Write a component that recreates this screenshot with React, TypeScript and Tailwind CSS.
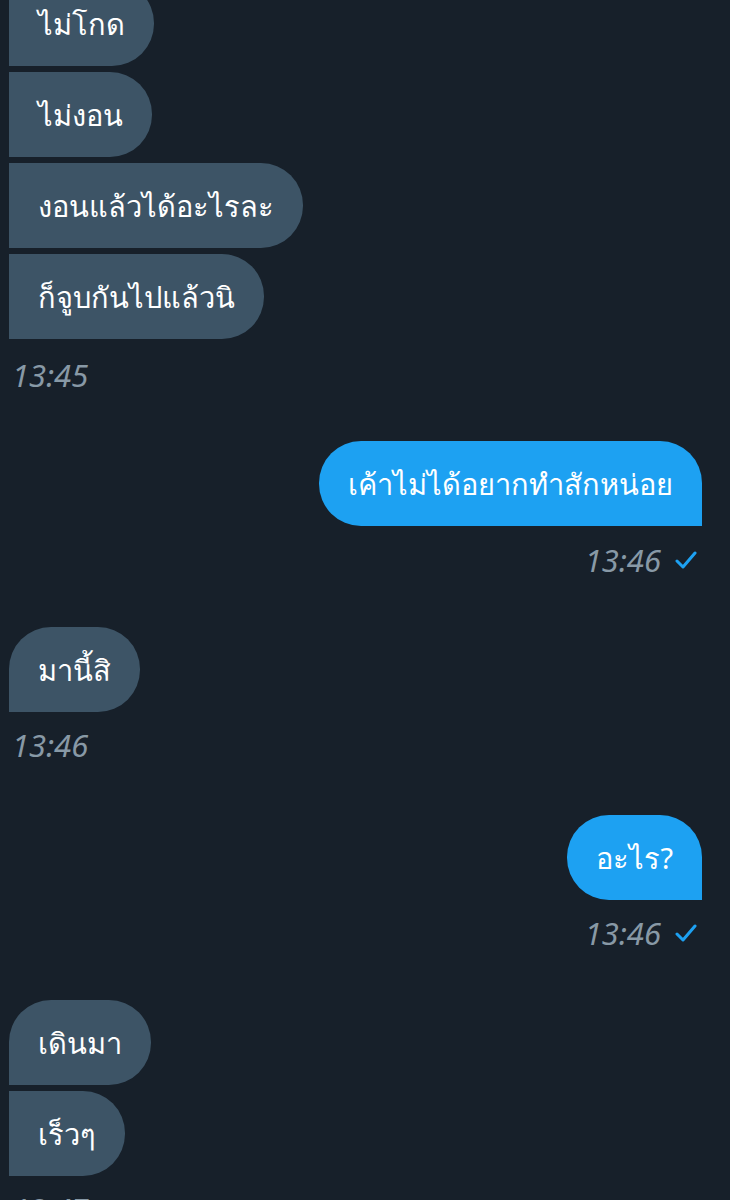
const Bubble = ({ text, me, shape }: { text: string; me?: boolean; shape: string }) => {
  return (
    <div
      className={
        "h-[85px] flex items-center px-[29px] text-[29px] text-white leading-none " +
        (me ? "bg-[#1da1f2] " : "bg-[#3d5466] ") +
        shape
      }
    >
      {text}
    </div>
  );
};

const Time = ({ t, me, className }: { t: string; me?: boolean; className: string }) => {
  return (
    <div
      className={
        "h-[30px] flex items-center gap-[14px] text-[31px] text-[#8899a6] italic " +
        (me ? "self-end pr-[5px] " : "pl-[3px] ") +
        className
      }
    >
      <span>{t}</span>
      {me && (
        <svg width="22" height="20" viewBox="0 0 22 20" fill="none">
          <path d="M2 11 L8 17 L20 3" stroke="#1da1f2" strokeWidth="3" strokeLinecap="round" strokeLinejoin="round" />
        </svg>
      )}
    </div>
  );
};

const App = () => {
  return (
    <main
      className="h-[1200px] w-[730px] overflow-hidden bg-[#17202a] pl-[9px] pr-[28px]"
      style={{ fontFamily: '"Noto Sans", "Open Sans", sans-serif' }}
    >
      <div className="flex flex-col -mt-[19px]">
        <div className="flex flex-col items-start gap-[6px]">
          <Bubble text="ไม่โกด" shape="rounded-r-[42px]" />
          <Bubble text="ไม่งอน" shape="rounded-r-[42px]" />
          <Bubble text="งอนแล้วได้อะไรละ" shape="rounded-r-[42px]" />
          <Bubble text="ก็จูบกันไปแล้วนิ" shape="rounded-r-[42px]" />
        </div>
        <Time t="13:45" className="mt-[21px]" />

        <div className="flex flex-col items-end mt-[51px]">
          <Bubble text="เค้าไม่ได้อยากทำสักหน่อย" me shape="rounded-t-[42px] rounded-bl-[42px]" />
        </div>
        <Time t="13:46" me className="mt-[19px]" />

        <div className="flex flex-col items-start mt-[52px]">
          <Bubble text="มานี้สิ" shape="rounded-r-[42px] rounded-tl-[42px]" />
        </div>
        <Time t="13:46" className="mt-[18px]" />

        <div className="flex flex-col items-end mt-[55px]">
          <Bubble text="อะไร?" me shape="rounded-t-[42px] rounded-bl-[42px]" />
        </div>
        <Time t="13:46" me className="mt-[18px]" />

        <div className="flex flex-col items-start gap-[6px] mt-[52px]">
          <Bubble text="เดินมา" shape="rounded-r-[42px] rounded-tl-[42px]" />
          <Bubble text="เร็วๆ" shape="rounded-r-[42px]" />
        </div>
        <Time t="13:47" className="mt-[18px]" />
      </div>
    </main>
  );
};

export default App;
